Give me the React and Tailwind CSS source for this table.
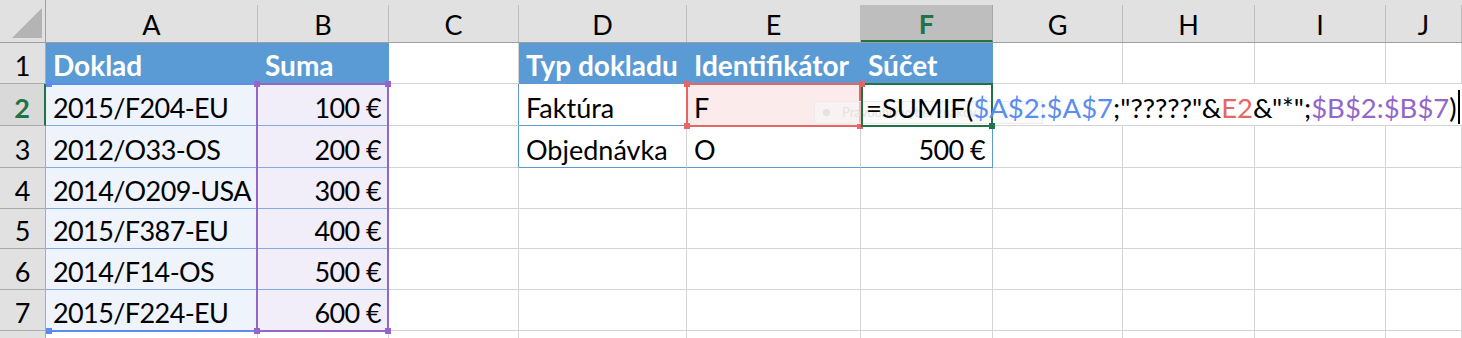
import React from 'react';

const COLS = ['A', 'B', 'C', 'D', 'E', 'F', 'G', 'H', 'I', 'J'];

const DATA_A = ['2015/F204-EU', '2012/O33-OS', '2014/O209-USA', '2015/F387-EU', '2014/F14-OS', '2015/F224-EU'];
const DATA_B = ['100 €', '200 €', '300 €', '400 €', '500 €', '600 €'];

function Cell({ className = '', children }) {
  return (
    <div className={`flex items-end whitespace-nowrap leading-none px-[7px] pb-[4px] border-r border-b ${className}`}>
      {children}
    </div>
  );
}

function Sq({ className }) {
  return <div className={`absolute w-[6px] h-[6px] ${className}`} />;
}

function ColHeader({ letter }) {
  const active = letter === 'F';
  return (
    <div className="flex flex-col bg-[#e1e1e1] border-b border-[#9f9f9f]">
      <div className="h-[5px]" />
      <div
        className={
          active
            ? 'flex-1 flex items-center justify-center bg-[#bebebe] border-r border-b-2 border-r-[#a8a8a8] border-b-[#217346] text-[#217346] font-bold text-[27px] leading-none'
            : 'flex-1 flex items-center justify-center border-r border-[#bdbdbd] text-black text-[27px] leading-none'
        }
      >
        <span className="mt-[1px]">{letter}</span>
      </div>
    </div>
  );
}

function RowHeader({ n }) {
  if (n === 2) {
    return (
      <div className="flex items-end justify-center pb-[4px] leading-none bg-[#d9d9d9] border-b border-[#ababab] border-r-2 border-r-[#217346] text-[#217346] font-bold text-[27px]">
        {n}
      </div>
    );
  }
  return (
    <div className="flex items-end justify-center pb-[4px] leading-none bg-[#e1e1e1] border-b border-r border-[#ababab] text-black text-[27px]">
      {n}
    </div>
  );
}

export default function App() {
  const cells = [];
  // header row
  cells.push(
    <div key="corner" className="flex items-end justify-end pr-[3px] pb-[4px] bg-[#e1e1e1] border-r border-b border-[#9f9f9f]">
      <svg width="30" height="30" viewBox="0 0 30 30">
        <polygon points="30,0 30,30 0,30" fill="#b4b4b4" />
      </svg>
    </div>
  );
  COLS.forEach((c) => cells.push(<ColHeader key={'h' + c} letter={c} />));

  // row 1
  cells.push(<RowHeader key="r1" n={1} />);
  cells.push(<Cell key="1A" className="bg-[#5b9bd5] border-[#5b9bd5] text-white font-bold text-[28px]">Doklad</Cell>);
  cells.push(<Cell key="1B" className="bg-[#5b9bd5] border-[#5b9bd5] text-white font-bold text-[28px]">Suma</Cell>);
  cells.push(<Cell key="1C" className="border-[#d4d4d4]" />);
  cells.push(<Cell key="1D" className="bg-[#5b9bd5] border-[#5b9bd5] text-white font-bold text-[28px]">Typ dokladu</Cell>);
  cells.push(<Cell key="1E" className="bg-[#5b9bd5] border-[#5b9bd5] text-white font-bold text-[28px]">Identifikátor</Cell>);
  cells.push(<Cell key="1F" className="bg-[#5b9bd5] border-[#5b9bd5] text-white font-bold text-[28px]">Súčet</Cell>);
  ['G', 'H', 'I', 'J'].forEach((c) => cells.push(<Cell key={'1' + c} className="border-[#d4d4d4]" />));

  // rows 2..7
  for (let i = 0; i < 6; i++) {
    const r = i + 2;
    cells.push(<RowHeader key={'r' + r} n={r} />);
    cells.push(
      <Cell key={r + 'A'} className="bg-[#eef3fc] border-r-[#d4d4d4] border-b-[#80abe3] text-black tracking-[-0.6px]">
        {DATA_A[i]}
      </Cell>
    );
    cells.push(
      <Cell key={r + 'B'} className="bg-[#f2eef9] border-r-[#d4d4d4] border-b-[#80abe3] text-black justify-end tracking-[-0.6px]">
        {DATA_B[i]}
      </Cell>
    );
    if (r === 2) {
      cells.push(<Cell key="2C" className="border-b-[#d4d4d4] border-r-[#5b9bd5]" />);
      cells.push(<Cell key="2D" className="border-b-[#5b9bd5] border-r-[#d4d4d4] text-black">Faktúra</Cell>);
      cells.push(<Cell key="2E" className="bg-[#fcebeb] border-[#d4d4d4] text-black">F</Cell>);
      cells.push(<div key="2F" className="col-span-5 bg-white border-b border-[#d4d4d4]" />);
    } else if (r === 3) {
      cells.push(<Cell key="3C" className="border-b-[#d4d4d4] border-r-[#5b9bd5]" />);
      cells.push(<Cell key="3D" className="border-b-[#5b9bd5] border-r-[#d4d4d4] text-black">Objednávka</Cell>);
      cells.push(<Cell key="3E" className="border-b-[#5b9bd5] border-r-[#d4d4d4] text-black">O</Cell>);
      cells.push(<Cell key="3F" className="border-b-[#5b9bd5] border-r-[#5b9bd5] text-black justify-end tracking-[-0.6px]">500 €</Cell>);
      ['G', 'H', 'I', 'J'].forEach((c) => cells.push(<Cell key={'3' + c} className="border-[#d4d4d4]" />));
    } else {
      COLS.slice(2).forEach((c) => cells.push(<Cell key={r + c} className="border-[#d4d4d4]" />));
    }
  }
  // row 8 (only a sliver visible)
  cells.push(<div key="r8" className="bg-[#e1e1e1] border-r border-[#ababab]" />);
  COLS.forEach((c) => cells.push(<div key={'8' + c} className="border-r border-[#d4d4d4]" />));

  return (
    <div className="w-[1462px] h-[338px] overflow-hidden bg-white font-['Lato',sans-serif] text-[27px]">
      <div className="relative grid grid-cols-[46px_212px_131px_130px_168px_174px_132px_130px_132px_131px_76px] grid-rows-[43px_41px_42px_42px_41px_40px_41px_41px_7px]">
        {cells}

        {/* A range (blue) */}
        <div className="absolute col-start-2 col-end-3 row-start-3 row-end-9 top-[-1px] left-0 right-0 bottom-[-1px] border-2 border-l-0 border-[#5b8def] pointer-events-none z-10">
          <Sq className="left-[0px] top-[-4px] bg-[#5b8def]" />
          <Sq className="left-[0px] bottom-[-4px] bg-[#5b8def]" />
        </div>
        {/* B range (purple) */}
        <div className="absolute col-start-3 col-end-4 row-start-3 row-end-9 top-[-1px] left-[-2px] right-0 bottom-[-1px] border-2 border-[#9466c9] pointer-events-none z-10">
          <Sq className="left-[-4px] top-[-4px] bg-[#9466c9]" />
          <Sq className="right-[-4px] top-[-4px] bg-[#9466c9]" />
          <Sq className="left-[-4px] bottom-[-4px] bg-[#9466c9]" />
          <Sq className="right-[-4px] bottom-[-4px] bg-[#9466c9]" />
        </div>
        {/* E2 range (red) */}
        <div className="absolute col-start-6 col-end-7 row-start-3 row-end-4 top-[-1px] left-[-1px] right-0 bottom-[-1px] border-2 border-[#e66565] pointer-events-none z-10">
          <Sq className="left-[-4px] top-[-4px] bg-[#e66565]" />
          <Sq className="left-[-4px] bottom-[-4px] bg-[#e66565]" />
          <Sq className="right-[-4px] bottom-[-4px] bg-[#e66565]" />
        </div>

        {/* faint tooltip behind the edited formula */}
        <div className="absolute left-[814px] top-[101px] w-[229px] h-[23px] bg-[#f6f6f6]/60 border border-[#ececec] z-20 flex items-center gap-[12px] pl-[8px] text-[13px] text-[#e2e2e2] leading-none">
          <span className="w-[7px] h-[7px] rounded-full bg-[#e2e2e2]" />
          <span>Pravouhlý výber znakov</span>
        </div>

        {/* F2 active edit cell */}
        <div className="absolute col-start-7 col-end-8 row-start-3 row-end-4 top-[-1px] left-0 right-0 bottom-[-1px] border-2 border-[#217346] pointer-events-none z-30">
          <Sq className="left-[-4px] top-[-4px] bg-[#e66565]" />
          <Sq className="right-[-4px] bottom-[-4px] bg-[#217346]" />
        </div>
        <div className="absolute col-start-7 col-end-12 row-start-3 row-end-4 left-[5px] bottom-[5px] z-30 flex items-end whitespace-nowrap leading-none text-black text-[27.5px]">
          <span>=SUMIF(</span>
          <span className="text-[#5b8def]">$A$2:$A$7</span>
          <span>;"?????"&amp;</span>
          <span className="text-[#e66565]">E2</span>
          <span>&amp;"*";</span>
          <span className="text-[#9466c9]">$B$2:$B$7</span>
          <span>)</span>
          <span className="ml-[1px] w-[2px] h-[34px] bg-black mb-[-3px]" />
        </div>
      </div>
    </div>
  );
}
